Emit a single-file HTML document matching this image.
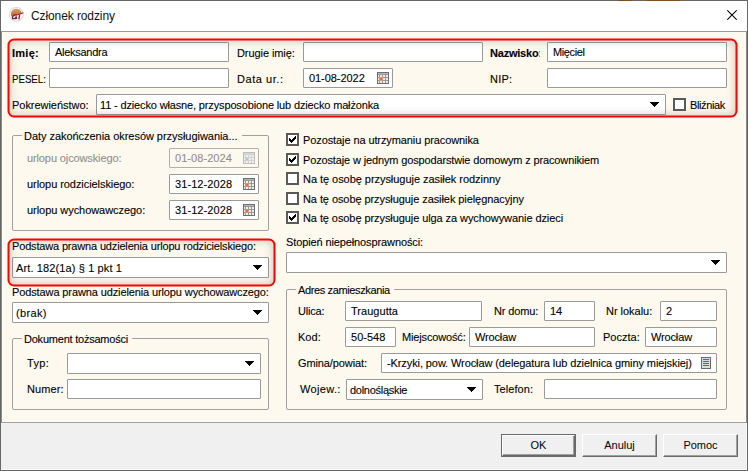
<!DOCTYPE html><html><head><meta charset="utf-8"><style>
*{box-sizing:border-box;margin:0;padding:0}
html,body{width:748px;height:471px;overflow:hidden;background:#f0f0f0}
body{position:relative;font-family:"Liberation Sans",sans-serif;font-size:11px;color:#000;-webkit-text-stroke:0.1px currentColor}
.a{position:absolute}
.t{position:absolute;line-height:13px;white-space:nowrap}
.b{font-weight:bold}
.dis{color:#8e8e8e}
.in{position:absolute;background:#fff;border:1px solid #9a9a9a;border-radius:1px}
.in .v{position:absolute;top:3px;line-height:13px;white-space:nowrap}
.dd{position:absolute}
.grp{position:absolute;border:1px solid #a0a0a0;border-radius:2px}
.gt{position:absolute;background:#fef9ee;padding-left:2px;line-height:13px;white-space:nowrap}
.cb{position:absolute;width:13px;height:13px;border:2px solid #5a5a5a;background:#fff}
.cb svg{position:absolute;left:1px;top:1px}
.cal{position:absolute}
.btn{position:absolute;height:23px;background:#f0f0f0;border-top:1px solid #fff;border-left:1px solid #fff;border-right:1px solid #696969;border-bottom:1px solid #696969;box-shadow:inset -1px -1px 0 #a0a0a0}
.btn span{position:absolute;left:0;right:0;top:4px;text-align:center;line-height:13px;-webkit-text-stroke:0}
.rs{position:absolute;border-radius:5px;box-shadow:inset 0 0 8px 1px rgba(80,75,60,0.30);z-index:4}
</style></head><body>
<svg width="0" height="0" style="position:absolute"><defs><g id="calg"><rect x="0" y="0" width="12" height="12" fill="#6f6f6f"/><rect x="1" y="1" width="10" height="10" fill="#999999"/><rect x="1" y="1" width="10" height="1" fill="#b4b4b4"/><rect x="1" y="3" width="1" height="2" fill="#ececec"/><rect x="3" y="3" width="2" height="2" fill="#ececec"/><rect x="6" y="3" width="2" height="2" fill="#ececec"/><rect x="9" y="3" width="2" height="2" fill="#ececec"/><rect x="1" y="6" width="1" height="2" fill="#ececec"/><rect x="3" y="6" width="2" height="2" fill="#ececec"/><rect x="6" y="6" width="2" height="2" fill="#ececec"/><rect x="9" y="6" width="2" height="2" fill="#ececec"/><rect x="1" y="9" width="1" height="2" fill="#ececec"/><rect x="3" y="9" width="2" height="2" fill="#ececec"/><rect x="6" y="9" width="2" height="2" fill="#ececec"/><rect x="9" y="9" width="2" height="2" fill="#ececec"/><rect x="2" y="5" width="4" height="4" fill="#d99a78"/><rect x="3" y="6" width="2" height="2" fill="#f26a2a"/></g><g id="calgd"><rect x="0" y="0" width="12" height="12" fill="#bdbdbd"/><rect x="1" y="1" width="10" height="10" fill="#d2d2d2"/><rect x="1" y="1" width="10" height="1" fill="#dadada"/><rect x="1" y="3" width="1" height="2" fill="#f0f0f0"/><rect x="3" y="3" width="2" height="2" fill="#f0f0f0"/><rect x="6" y="3" width="2" height="2" fill="#f0f0f0"/><rect x="9" y="3" width="2" height="2" fill="#f0f0f0"/><rect x="1" y="6" width="1" height="2" fill="#f0f0f0"/><rect x="3" y="6" width="2" height="2" fill="#f0f0f0"/><rect x="6" y="6" width="2" height="2" fill="#f0f0f0"/><rect x="9" y="6" width="2" height="2" fill="#f0f0f0"/><rect x="1" y="9" width="1" height="2" fill="#f0f0f0"/><rect x="3" y="9" width="2" height="2" fill="#f0f0f0"/><rect x="6" y="9" width="2" height="2" fill="#f0f0f0"/><rect x="9" y="9" width="2" height="2" fill="#f0f0f0"/><rect x="3" y="6" width="2" height="2" fill="#c4c4c4"/></g><g id="chk"><rect x="0" y="2" width="1" height="3"/><rect x="1" y="3" width="1" height="3"/><rect x="2" y="4" width="1" height="3"/><rect x="3" y="3" width="1" height="3"/><rect x="4" y="2" width="1" height="3"/><rect x="5" y="1" width="1" height="3"/><rect x="6" y="0" width="1" height="3"/></g><g id="arr"><rect x="0" y="0" width="9" height="1"/><rect x="1" y="1" width="7" height="1"/><rect x="2" y="2" width="5" height="1"/><rect x="3" y="3" width="3" height="1"/><rect x="4" y="4" width="1" height="1"/></g><g id="lst"><rect x="0" y="0" width="10" height="12" fill="#6a6a6a"/><rect x="1" y="1" width="8" height="10" fill="#dcdcdc"/><g fill="#2d7a96"><rect x="2" y="2" width="6" height="1"/><rect x="2" y="4" width="6" height="1"/><rect x="2" y="6" width="6" height="1"/><rect x="2" y="8" width="6" height="1"/></g></g></defs></svg>
<div class="a" style="left:0;top:0;width:748px;height:471px;border:1px solid #676767;background:#f0f0f0"></div>
<div class="a" style="left:1px;top:1px;width:746px;height:30px;background:#fff"></div>
<div class="a" style="left:618px;top:0;width:14px;height:1px;background:#7a4c22"></div><div class="a" style="left:647px;top:0;width:33px;height:1px;background:#7a4c22"></div>
<div class="a" style="left:1px;top:31px;width:746px;height:1px;background:#999"></div>
<div class="a" style="left:1px;top:32px;width:746px;height:391px;background:#fef9ee;border-left:1px solid #888;border-right:1px solid #888;border-bottom:1px solid #a0a0a0"></div>
<div class="a" style="left:2px;top:32px;width:744px;height:390px;border-left:1px solid #fffef6;border-right:1px solid #fffef6;border-bottom:1px solid #fffef6"></div>
<div class="a" style="left:1px;top:423px;width:746px;height:47px;border-right:1px solid #fafafa;border-bottom:1px solid #fafafa"></div>
<svg class="a" style="left:6px;top:5px" width="20" height="20" viewBox="0 0 20 20">
 <defs><linearGradient id="og" x1="0" y1="0" x2="0" y2="1"><stop offset="0" stop-color="#dca068"/><stop offset="1" stop-color="#b86a2c"/></linearGradient></defs>
 <circle cx="10.3" cy="9.4" r="6.9" fill="none" stroke="#dfe2e5" stroke-width="1.6"/>
 <circle cx="10.3" cy="9.4" r="6.1" fill="#fbfbfb"/>
 <path d="M5.0 10.6 A5.6 5.6 0 0 1 15.9 8.0 L16.2 8.4 Q10.5 9.2 5.2 11.4 Z" fill="url(#og)"/>
 <path d="M10.6 9.6 Q8.4 9.4 6.8 11.4 Q6.0 12.8 6.6 13.6 Q8.4 13.9 10.6 13.3 L10.4 12.0 L8.8 12.4" stroke="#8c1a2a" stroke-width="1.2" fill="none"/>
 <path d="M9.8 10.3 Q13.6 9.2 17.4 7.8" stroke="#8c1a2a" stroke-width="1" fill="none"/>
 <path d="M13.6 9.6 L12.9 14.4" stroke="#8c1a2a" stroke-width="1.3" fill="none"/>
</svg>
<div class="a" style="left:31px;top:9px;font-size:12px;letter-spacing:-0.1px;line-height:14px;white-space:nowrap;-webkit-text-stroke:0;color:#111">Członek rodziny</div>
<svg class="a" style="left:727px;top:10px" width="10" height="10" viewBox="0 0 10 10"><path d="M0.3 0.3 L9.7 9.7 M9.7 0.3 L0.3 9.7" stroke="#000" stroke-width="1.05"/></svg>
<div class="t b" style="left:12px;top:47px;"><span style="letter-spacing:0.25px">Imię:</span></div>
<div class="in " style="left:49px;top:42px;width:180px;height:20px;"><span class="v " style="left:5px;top:3px"><span style="letter-spacing:-0.278px">Aleksandra</span></span></div>
<div class="t " style="left:237px;top:47px;"><span style="letter-spacing:-0.082px">Drugie imię:</span></div>
<div class="in " style="left:303px;top:42px;width:180px;height:20px;"></div>
<div class="t b" style="left:490px;top:47px;width:50px;overflow:hidden"><span style="letter-spacing:-0.214px">Nazwisko:</span></div>
<div class="in " style="left:547px;top:42px;width:180px;height:20px;"><span class="v " style="left:5px;top:3px"><span style="letter-spacing:-0.383px">Mięciel</span></span></div>
<div class="t " style="left:12px;top:73px;transform:scaleX(0.88);transform-origin:0 0">PESEL:</div>
<div class="in " style="left:49px;top:68px;width:180px;height:20px;"></div>
<div class="t " style="left:237px;top:73px;"><span style="letter-spacing:0.55px">Data ur.:</span></div>
<div class="in " style="left:303px;top:68px;width:90px;height:20px;"><span class="v " style="left:5px;top:3px"><span style="letter-spacing:-0.056px">01-08-2022</span></span><svg class="cal" style="left:73px;top:3px" width="12" height="12"><use href="#calg"/></svg></div>
<div class="t " style="left:490px;top:73px;"><span style="letter-spacing:0.233px">NIP:</span></div>
<div class="in " style="left:547px;top:68px;width:180px;height:20px;"></div>
<div class="t " style="left:12px;top:99px;"><span style="letter-spacing:-0.038px">Pokrewieństwo:</span></div>
<div class="in " style="left:96px;top:94px;width:570px;height:21px;"><span class="v " style="left:3px;top:4px"><span style="letter-spacing:-0.145px">11 - dziecko własne, przysposobione lub dziecko małżonka</span></span><svg class="dd" style="left:553px;top:7px" width="9" height="5"><use href="#arr"/></svg></div>
<div class="cb" style="left:673px;top:98px"></div>
<div class="t " style="left:690px;top:99px;"><span style="letter-spacing:-0.371px">Bliźniak</span></div>
<div class="grp" style="left:12px;top:135px;width:257px;height:96px"></div>
<div class="gt" style="left:22px;top:130px;padding-right:4px"><span style="letter-spacing:-0.041px">Daty zakończenia okresów przysługiwania...</span></div>
<div class="t dis" style="left:27px;top:152px;"><span style="letter-spacing:-0.117px">urlopu ojcowskiego:</span></div>
<div class="in " style="left:169px;top:148px;width:90px;height:20px;background:#fef9ee;border-color:#b0b0b0"><span class="v dis" style="left:5px;top:3px"><span style="letter-spacing:0.056px">01-08-2024</span></span><svg class="cal" style="left:73px;top:3px" width="12" height="12"><use href="#calgd"/></svg></div>
<div class="t " style="left:27px;top:178px;"><span style="letter-spacing:-0.064px">urlopu rodzicielskiego:</span></div>
<div class="in " style="left:169px;top:174px;width:90px;height:20px;"><span class="v " style="left:5px;top:3px"><span style="letter-spacing:0.089px">31-12-2028</span></span><svg class="cal" style="left:73px;top:3px" width="12" height="12"><use href="#calg"/></svg></div>
<div class="t " style="left:27px;top:204px;"><span style="letter-spacing:-0.05px">urlopu wychowawczego:</span></div>
<div class="in " style="left:169px;top:200px;width:90px;height:20px;"><span class="v " style="left:5px;top:3px"><span style="letter-spacing:0.089px">31-12-2028</span></span><svg class="cal" style="left:73px;top:3px" width="12" height="12"><use href="#calg"/></svg></div>
<div class="t " style="left:12px;top:240px;"><span style="letter-spacing:-0.163px">Podstawa prawna udzielenia urlopu rodzicielskiego:</span></div>
<div class="in " style="left:12px;top:257px;width:257px;height:21px;"><span class="v " style="left:3px;top:4px"><span style="letter-spacing:0.124px">Art. 182(1a) § 1 pkt 1</span></span><svg class="dd" style="left:240px;top:7px" width="9" height="5"><use href="#arr"/></svg></div>
<div class="t " style="left:12px;top:286px;"><span style="letter-spacing:-0.115px">Podstawa prawna udzielenia urlopu wychowawczego:</span></div>
<div class="in " style="left:12px;top:302px;width:257px;height:21px;"><span class="v " style="left:3px;top:4px"><span style="letter-spacing:0.34px">(brak)</span></span><svg class="dd" style="left:240px;top:7px" width="9" height="5"><use href="#arr"/></svg></div>
<div class="grp" style="left:12px;top:338px;width:257px;height:72px"></div>
<div class="gt" style="left:22px;top:333px;padding-right:4px"><span style="letter-spacing:-0.222px">Dokument tożsamości</span></div>
<div class="t " style="left:27px;top:357px;"><span style="letter-spacing:0.3px">Typ:</span></div>
<div class="in " style="left:67px;top:353px;width:194px;height:21px;"><svg class="dd" style="left:177px;top:7px" width="9" height="5"><use href="#arr"/></svg></div>
<div class="t " style="left:27px;top:383px;"><span style="letter-spacing:0.08px">Numer:</span></div>
<div class="in " style="left:67px;top:379px;width:194px;height:20px;"></div>
<div class="cb" style="left:286px;top:133px"><svg width="7" height="7"><use href="#chk"/></svg></div>
<div class="t " style="left:303px;top:134px;"><span style="letter-spacing:-0.097px">Pozostaje na utrzymaniu pracownika</span></div>
<div class="cb" style="left:286px;top:153px"><svg width="7" height="7"><use href="#chk"/></svg></div>
<div class="t " style="left:303px;top:154px;"><span style="letter-spacing:-0.141px">Pozostaje w jednym gospodarstwie domowym z pracownikiem</span></div>
<div class="cb" style="left:286px;top:172px"></div>
<div class="t " style="left:303px;top:173px;"><span style="letter-spacing:-0.046px">Na tę osobę przysługuje zasiłek rodzinny</span></div>
<div class="cb" style="left:286px;top:192px"></div>
<div class="t " style="left:303px;top:193px;"><span style="letter-spacing:-0.077px">Na tę osobę przysługuje zasiłek pielęgnacyjny</span></div>
<div class="cb" style="left:286px;top:211px"><svg width="7" height="7"><use href="#chk"/></svg></div>
<div class="t " style="left:303px;top:212px;"><span style="letter-spacing:-0.08px">Na tę osobę przysługuje ulga za wychowywanie dzieci</span></div>
<div class="t " style="left:286px;top:236px;"><span style="letter-spacing:-0.115px">Stopień niepełnosprawności:</span></div>
<div class="in " style="left:286px;top:252px;width:441px;height:21px;"><svg class="dd" style="left:424px;top:7px" width="9" height="5"><use href="#arr"/></svg></div>
<div class="grp" style="left:286px;top:289px;width:441px;height:121px"></div>
<div class="gt" style="left:296px;top:284px;padding-right:4px"><span style="letter-spacing:-0.371px">Adres zamieszkania</span></div>
<div class="t " style="left:298px;top:305px;"><span style="letter-spacing:-0.18px">Ulica:</span></div>
<div class="in " style="left:345px;top:301px;width:137px;height:20px;"><span class="v " style="left:5px;top:3px"><span style="letter-spacing:0.037px">Traugutta</span></span></div>
<div class="t " style="left:494px;top:305px;"><span style="letter-spacing:-0.129px">Nr domu:</span></div>
<div class="in " style="left:544px;top:301px;width:51px;height:20px;"><span class="v " style="left:5px;top:3px">14</span></div>
<div class="t " style="left:606px;top:305px;"><span style="letter-spacing:-0.022px">Nr lokalu:</span></div>
<div class="in " style="left:660px;top:301px;width:57px;height:20px;"><span class="v " style="left:5px;top:3px">2</span></div>
<div class="t " style="left:298px;top:331px;"><span style="letter-spacing:0.033px">Kod:</span></div>
<div class="in " style="left:345px;top:327px;width:51px;height:20px;"><span class="v " style="left:5px;top:3px"><span style="letter-spacing:0.02px">50-548</span></span></div>
<div class="t " style="left:402px;top:331px;"><span style="letter-spacing:-0.155px">Miejscowość:</span></div>
<div class="in " style="left:469px;top:327px;width:126px;height:20px;"><span class="v " style="left:5px;top:3px"><span style="letter-spacing:-0.15px">Wrocław</span></span></div>
<div class="t " style="left:603px;top:331px;"><span style="letter-spacing:0.017px">Poczta:</span></div>
<div class="in " style="left:645px;top:327px;width:72px;height:20px;"><span class="v " style="left:5px;top:3px"><span style="letter-spacing:-0.15px">Wrocław</span></span></div>
<div class="t " style="left:298px;top:357px;"><span style="letter-spacing:-0.108px">Gmina/powiat:</span></div>
<div class="in " style="left:381px;top:353px;width:336px;height:20px;"><span class="v " style="left:5px;top:3px"><span style="letter-spacing:-0.098px">-Krzyki, pow. Wrocław (delegatura lub dzielnica gminy miejskiej)</span></span><svg class="a" style="left:319px;top:3px" width="10" height="12"><use href="#lst"/></svg></div>
<div class="t " style="left:300px;top:383px;"><span style="letter-spacing:0.35px">Wojew.:</span></div>
<div class="in " style="left:346px;top:379px;width:137px;height:21px;"><span class="v " style="left:3px;top:4px"><span style="letter-spacing:-0.282px">dolnośląskie</span></span><svg class="dd" style="left:120px;top:7px" width="9" height="5"><use href="#arr"/></svg></div>
<div class="t " style="left:494px;top:383px;"><span style="letter-spacing:0.071px">Telefon:</span></div>
<div class="in " style="left:544px;top:379px;width:173px;height:20px;"></div>
<div class="rs" style="left:9px;top:40px;width:727px;height:76px"></div>
<div class="rs" style="left:9px;top:240px;width:265px;height:45px"></div>
<svg class="a" style="left:0;top:0;z-index:6" width="748" height="471">
<rect x="8.5" y="39.5" width="728" height="77" rx="5.5" fill="none" stroke="#ff0000" stroke-width="2"/>
<rect x="8.5" y="239.5" width="266" height="46" rx="5.5" fill="none" stroke="#ff0000" stroke-width="2"/>
</svg>
<div class="a" style="left:501px;top:434px;width:75px;height:23px;border:1px solid #6a6a6a"></div>
<div class="btn" style="left:502px;top:435px;width:73px;height:21px"><span style="top:3px">OK</span></div>
<div class="btn" style="left:582px;top:434px;width:75px"><span>Anuluj</span></div>
<div class="btn" style="left:663px;top:434px;width:75px"><span>Pomoc</span></div>
</body></html>
